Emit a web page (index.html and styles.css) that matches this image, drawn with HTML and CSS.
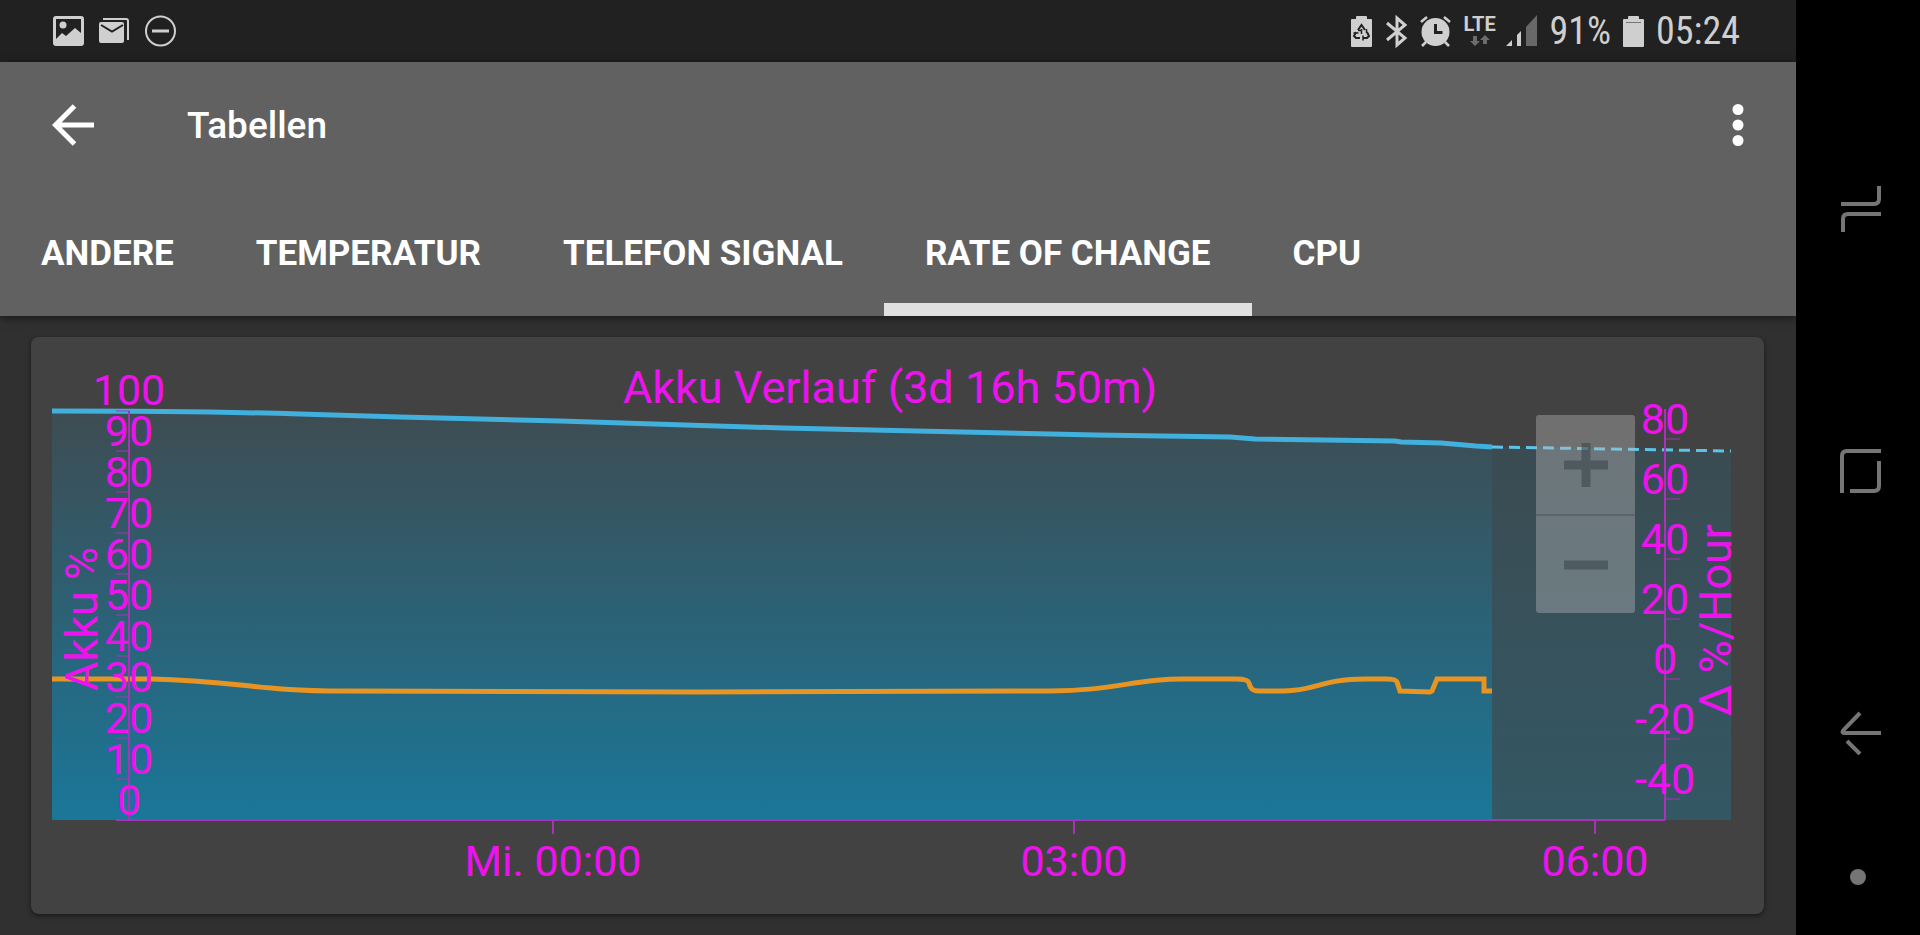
FILE: index.html
```html
<!DOCTYPE html>
<html lang="de">
<head>
  <meta charset="UTF-8">
  <meta name="viewport" content="width=device-width, initial-scale=1.0">
  <title>Tabellen</title>
  <link rel="stylesheet" href="styles.css">
</head>
<body>
  <div class="app">
    <div class="status-bar">
      <div class="notifications">
        <svg width="31" height="32" viewBox="0 0 31 32" fill="#cfcfcf">
          <path fill-rule="evenodd" d="M3 1h25a3 3 0 0 1 3 3v24a3 3 0 0 1-3 3H3a3 3 0 0 1-3-3V4a3 3 0 0 1 3-3zM3 4v20l6-6 4 3 9-8 6 5V4z"/>
          <circle cx="10" cy="10" r="3.5"/>
        </svg>
        <svg width="31" height="32" viewBox="0 0 31 32">
          <path d="M4 4h23a2 2 0 0 1 2 2v19" fill="none" stroke="#cfcfcf" stroke-width="2"/>
          <rect y="7" width="25" height="21" rx="2" fill="#cfcfcf"/>
          <path d="M2 10l11 6.500 11-6.500" fill="none" stroke="#212121" stroke-width="2"/>
        </svg>
        <svg width="32" height="32" viewBox="0 0 32 32" fill="none" stroke="#cfcfcf">
          <circle cx="15.500" cy="16" r="14.500" stroke-width="2"/>
          <path d="M7 16h17" stroke-width="3"/>
        </svg>
      </div>
      <div class="indicators">
        <svg width="21" height="32" viewBox="0 0 21 32">
          <path d="M1 4h4V2q0-1 1-1h9q1 0 1 1v2h4q1 0 1 1v26q0 1-1 1H1q-1 0-1-1V5q0-1 1-1z" fill="#cfcfcf"/>
          <path d="M7 15l3.500-5 3.500 5M16 17l2 4-2 2h-4M9 23H5l-2-2 2-4" fill="none" stroke="#212121" stroke-width="2"/>
          <path d="M10.500 14v5M7 15.500h3M12 20.500v5M15.500 14v4M2.500 18h5" stroke="#212121" stroke-width="1.500"/>
        </svg>
        <svg width="24" height="34" viewBox="0 0 24 34" fill="none" stroke="#cfcfcf" stroke-width="3">
          <path d="M3 9l18 15-8 7V4l8 7L3 26"/>
        </svg>
        <svg width="34" height="32" viewBox="0 0 34 32">
          <circle cx="15.500" cy="17" r="14" fill="#cfcfcf"/>
          <path d="M1 7l6-5M24 2l6 5M6 27l-4 4M25 27l4 4" stroke="#cfcfcf" stroke-width="2.500"/>
          <path d="M15.500 9v8.500h7" fill="none" stroke="#212121" stroke-width="3"/>
        </svg>
        <div class="network">
          <span>LTE</span>
          <svg width="20" height="12" viewBox="0 0 20 12" fill="#6c6c6c">
            <path d="M3 1h4v5h3l-5 5-5-5h3zM13 9h4V5h3l-5-5-5 5h3z"/>
          </svg>
        </div>
        <svg width="32" height="32" viewBox="0 0 32 32">
          <path d="M0 31l6-6v6zM11 31V20l4-4v15z" fill="#cfcfcf"/>
          <path d="M20 31V12L31 0v31z" fill="#686868"/>
        </svg>
        <span class="status-text">91%</span>
        <svg width="21" height="32" viewBox="0 0 21 32">
          <path d="M1 4h4V2q0-1 1-1h9q1 0 1 1v2h4q1 0 1 1v26q0 1-1 1H1q-1 0-1-1V5q0-1 1-1z" fill="#cfcfcf"/>
          <path d="M3 7.500h15" stroke="#777" stroke-width="1"/>
        </svg>
        <span class="status-text">05:24</span>
      </div>
    </div>

    <header class="app-bar">
      <div class="toolbar">
        <button class="icon-button" aria-label="Zurück">
          <svg width="42" height="42" viewBox="0 0 42 42" fill="none" stroke="#fff" stroke-width="5">
            <path d="M42 21H4M22.500 2L3.500 21l19 19"/>
          </svg>
        </button>
        <h1>Tabellen</h1>
        <button class="icon-button menu" aria-label="Menü">
          <svg width="12" height="42" viewBox="0 0 12 42" fill="#fff">
            <circle cx="6" cy="5.500" r="5.500"/>
            <circle cx="6" cy="21" r="5.500"/>
            <circle cx="6" cy="36.500" r="5.500"/>
          </svg>
        </button>
      </div>
      <nav class="tabs">
        <a href="#andere">ANDERE</a>
        <a href="#temperatur">TEMPERATUR</a>
        <a href="#signal">TELEFON SIGNAL</a>
        <a href="#rate" class="active" aria-current="page">RATE OF CHANGE</a>
        <a href="#cpu">CPU</a>
      </nav>
    </header>

    <main class="content">
      <section class="card">
        <svg class="chart" viewBox="0 0 1733 577">
          <defs>
            <linearGradient id="history" x1="0" y1="74" x2="0" y2="483" gradientUnits="userSpaceOnUse">
              <stop offset="0" stop-color="#3e4c52"/>
              <stop offset="1" stop-color="#1a7799"/>
            </linearGradient>
            <linearGradient id="forecast" x1="0" y1="109" x2="0" y2="483" gradientUnits="userSpaceOnUse">
              <stop offset="0" stop-color="#3b4b52"/>
              <stop offset="1" stop-color="#335864"/>
            </linearGradient>
          </defs>

          <!-- battery level -->
          <path fill="url(#history)" d="M21 74C120 74 200 75 269 77L369 80 529 84 752 91 1065 98 1199 100 1224 102 1364 104 1370 105 1410 106 1445 109 1461 110V483H21z"/>
          <path fill="url(#forecast)" d="M1461 110L1700 114V483H1461z"/>
          <path class="level" d="M21 74C120 74 200 75 269 77L369 80 529 84 752 91 1065 98 1199 100 1224 102 1364 104 1370 105 1410 106 1445 109 1461 110"/>
          <path class="level-forecast" d="M1461 110L1700 114"/>

          <!-- rate of change -->
          <path class="rate" d="M21 342H121C205 344 225 354 314 354L669 355 1020 354C1080 354 1105 342 1150 342H1205Q1217 342 1218 346C1219 352 1222 354 1228 354H1253C1285 354 1290 342 1334 342H1355Q1365 342 1366 345L1369 354 1399 355 1401 354 1406 342H1453V354H1461"/>

          <!-- axes -->
          <path class="axis" d="M98 74V483M85 483H1634M1634 72V483"/>
          <path class="axis tick" d="M85 74h14M85 114h14M85 155h14M85 196h14M85 237h14M85 278h14M85 319h14M85 360h14M85 401h14M85 442h14"/>
          <path class="axis tick" d="M1634 102h15M1634 162h15M1634 222h15M1634 282h15M1634 342h15M1634 402h15M1634 462h15"/>
          <path class="axis" d="M522 483v14M1043 483v14M1564 483v14"/>

          <text class="chart-title" x="859" y="66">Akku Verlauf (3d 16h 50m)</text>
          <g class="labels">
            <text x="98" y="68">100</text>
            <text x="98" y="109">90</text>
            <text x="98" y="150">80</text>
            <text x="98" y="191">70</text>
            <text x="98" y="232">60</text>
            <text x="98" y="273">50</text>
            <text x="98" y="314">40</text>
            <text x="98" y="355">30</text>
            <text x="98" y="396">20</text>
            <text x="98" y="437">10</text>
            <text x="98" y="478">0</text>
          </g>
          <g class="labels">
            <text x="1634" y="97">80</text>
            <text x="1634" y="157">60</text>
            <text x="1634" y="217">40</text>
            <text x="1634" y="277">20</text>
            <text x="1634" y="337">0</text>
            <text x="1634" y="397">-20</text>
            <text x="1634" y="457">-40</text>
          </g>
          <g class="labels">
            <text x="522" y="539">Mi. 00:00</text>
            <text x="1043" y="539">03:00</text>
            <text x="1564" y="539">06:00</text>
          </g>
          <text class="chart-title" transform="translate(66 282) rotate(-90)">Akku %</text>
          <text class="chart-title" transform="translate(1700 283) rotate(-90)">Δ %/Hour</text>
        </svg>
        <div class="zoom">
          <button aria-label="Vergrößern">
            <svg width="44" height="44" viewBox="0 0 44 44"><path d="M0 22h44M22 0v44"/></svg>
          </button>
          <button aria-label="Verkleinern">
            <svg width="44" height="44" viewBox="0 0 44 44"><path d="M0 22h44"/></svg>
          </button>
        </div>
      </section>
    </main>
  </div>

  <aside class="nav-bar">
    <button aria-label="Letzte Apps">
      <svg width="42" height="46" viewBox="0 0 42 46">
        <path d="M1 18h33q5 0 5-5V0M3 46V33q0-5 5-5h33"/>
      </svg>
    </button>
    <button aria-label="Startseite">
      <svg width="42" height="44" viewBox="0 0 42 44">
        <path d="M2 44V7q0-5 5-5h34M39 12v25q0 5-5 5H10"/>
      </svg>
    </button>
    <button aria-label="Zurück">
      <svg width="42" height="44" viewBox="0 0 42 44">
        <path d="M41 22H5q-4 0-1.500-3L20 2M7 30l13 13"/>
      </svg>
    </button>
    <button class="dot" aria-label="Leiste ausblenden"></button>
  </aside>
</body>
</html>
```
FILE: styles.css
```css
* {
  box-sizing: border-box;
}

body {
  margin: 0;
  min-height: 100vh;
  display: flex;
  background: #000;
  color: #fff;
  font-family: Roboto, "Liberation Sans", sans-serif;
}

button {
  padding: 0;
  border: 0;
  background: none;
  cursor: pointer;
}

svg {
  display: block;
}

.app {
  flex: 1;
  min-width: 0;
  display: flex;
  flex-direction: column;
  background: #303030;
}

/* status bar */
.status-bar {
  height: 62px;
  padding: 0 56px 0 53px;
  display: flex;
  align-items: center;
  justify-content: space-between;
  background: #212121;
  color: #cfcfcf;
}

.notifications {
  display: flex;
  align-items: center;
  gap: 15px;
}

.indicators {
  display: flex;
  align-items: center;
  gap: 12px;
}

.status-text {
  font-family: "Roboto Condensed", Roboto, sans-serif;
  font-size: 38px;
  line-height: 40px;
}

.network {
  width: 28px;
  display: flex;
  flex-direction: column;
  align-items: center;
  gap: 2px;
  font-size: 20px;
  font-weight: 700;
  line-height: 18px;
}

/* toolbar and tabs */
.app-bar {
  position: relative;
  background: #616161;
  box-shadow: 0 2px 8px rgba(0, 0, 0, 0.5);
}

.toolbar {
  height: 126px;
  padding: 0 52px;
  display: flex;
  align-items: center;
}

.toolbar h1 {
  margin: 0 0 0 93px;
  font-size: 37px;
  font-weight: 500;
}

.menu {
  margin-left: auto;
}

.tabs {
  height: 128px;
  display: flex;
}

.tabs a {
  padding: 0 41px;
  border-bottom: 13px solid transparent;
  color: #fff;
  font-size: 35px;
  font-weight: 700;
  line-height: 132px;
  text-decoration: none;
  white-space: nowrap;
}

.tabs .active {
  border-color: #e0e0e0;
}

/* chart */
.content {
  flex: 1;
  padding: 21px 32px 21px 31px;
}

.card {
  position: relative;
  border-radius: 8px;
  background: #424242;
  box-shadow: 0 2px 5px rgba(0, 0, 0, 0.5);
}

.chart {
  width: 100%;
  height: auto;
}

.level {
  fill: none;
  stroke: #42b0dc;
  stroke-width: 5;
}

.level-forecast {
  fill: none;
  stroke: #5cc4e8;
  stroke-width: 3;
  stroke-dasharray: 11 6;
}

.rate {
  fill: none;
  stroke: #e89422;
  stroke-width: 5;
}

.axis {
  fill: none;
  stroke: #a832b8;
  stroke-width: 2;
}

.tick {
  stroke-width: 1;
}

.labels,
.chart-title {
  fill: #ee12ee;
  font-size: 43px;
  text-anchor: middle;
}

.chart-title {
  font-size: 45px;
}

.zoom {
  position: absolute;
  top: 78px;
  right: 129px;
  width: 99px;
  border-radius: 3px;
  background: rgba(190, 190, 190, 0.38);
}

.zoom button {
  width: 100%;
  height: 99px;
  display: flex;
  align-items: center;
  justify-content: center;
}

.zoom button + button {
  border-top: 2px solid rgba(60, 75, 80, 0.4);
}

.zoom path {
  stroke: rgba(60, 72, 78, 0.6);
  stroke-width: 9;
}

/* navigation keys */
.nav-bar {
  width: 124px;
  padding: 78px 0 45px;
  display: flex;
  flex-direction: column;
  align-items: center;
}

.nav-bar button {
  flex: 1;
  padding-left: 6px;
}

.nav-bar path {
  fill: none;
  stroke: #757575;
  stroke-width: 4;
}

.nav-bar .dot {
  flex: none;
  width: 16px;
  height: 16px;
  margin: 5px 0;
  padding: 0;
  border-radius: 50%;
  background: #757575;
}
```
